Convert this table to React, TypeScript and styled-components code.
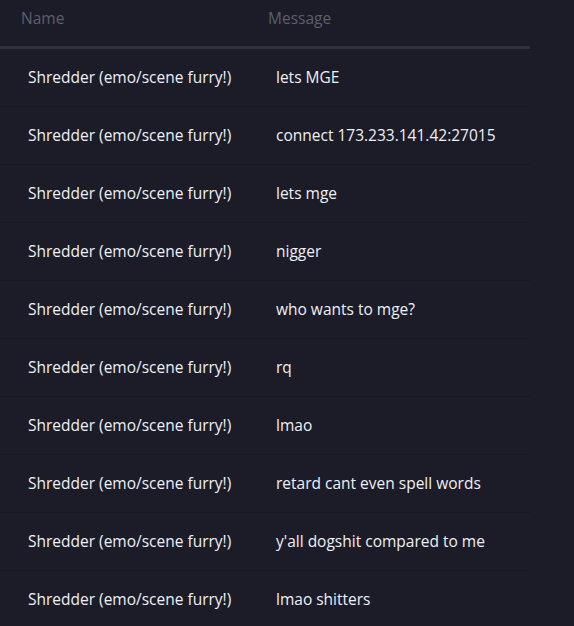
import React from "react";
import styled, { createGlobalStyle } from "styled-components";

const Global = createGlobalStyle`
  html, body {
    margin: 0;
    padding: 0;
    background: #1b1c28;
  }
  body {
    font-family: "Open Sans", "Noto Sans", sans-serif;
  }
`;

const Page = styled.div`
  width: 574px;
  height: 626px;
  overflow: hidden;
  background: #1b1c28;
`;

const Table = styled.table`
  width: 530px;
  border-collapse: collapse;
  table-layout: fixed;
`;

const HeadCell = styled.th<{ $w?: number; $pad: number }>`
  width: ${(p) => (p.$w ? `${p.$w}px` : "auto")};
  box-sizing: border-box;
  padding: 0 0 0 ${(p) => p.$pad}px;
  height: 47px;
  text-align: left;
  font-weight: 400;
  font-size: 15.5px;
  color: #5b5f6a;
  border-bottom: 3px solid #2f313d;
  vertical-align: top;
  line-height: 36px;
`;

const Row = styled.tr`
  border-bottom: 1px solid #161720;
`;

const Cell = styled.td<{ $pad: number }>`
  height: 57px;
  padding: 0 0 0 ${(p) => p.$pad}px;
  font-size: 15.5px;
  color: #eef0f5;
  white-space: nowrap;
  vertical-align: middle;
`;

const messages = [
  "lets MGE",
  "connect 173.233.141.42:27015",
  "lets mge",
  "nigger",
  "who wants to mge?",
  "rq",
  "lmao",
  "retard cant even spell words",
  "y'all dogshit compared to me",
  "lmao shitters",
];

export default function App() {
  return (
    <Page>
      <Global />
      <Table>
        <thead>
          <tr>
            <HeadCell $w={248} $pad={21}>Name</HeadCell>
            <HeadCell $pad={20}>Message</HeadCell>
          </tr>
        </thead>
        <tbody>
          {messages.map((m, i) => (
            <Row key={i}>
              <Cell $pad={28}>Shredder (emo/scene furry!)</Cell>
              <Cell $pad={28}>{m}</Cell>
            </Row>
          ))}
        </tbody>
      </Table>
    </Page>
  );
}
